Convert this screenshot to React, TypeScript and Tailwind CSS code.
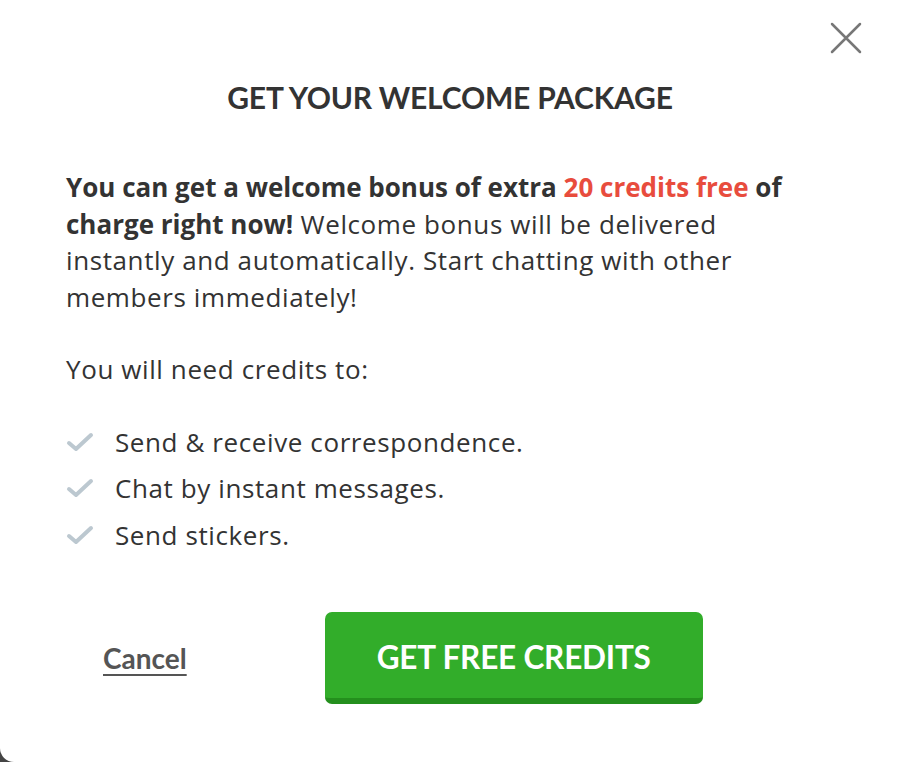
import React from 'react';

const perks = [
  "Send & receive correspondence.",
  "Chat by instant messages.",
  "Send stickers.",
];

const Check = () => (
  <svg width="28" height="22" viewBox="0 0 28 22" fill="none" className="shrink-0">
    <path d="M3 12 L10 18 L25 4" stroke="#bcc8d0" strokeWidth="4" strokeLinecap="round" strokeLinejoin="round" />
  </svg>
);

const App = () => {
  return (
    <div className="w-[900px] h-[762px] bg-[#444]">
      <div
        className="relative w-full h-full bg-white rounded-bl-[14px] text-[#333] flex flex-col"
        style={{ fontFamily: 'Lato, "Noto Sans", sans-serif' }}
      >
        <button className="absolute right-[38px] top-[22px] w-[32px] h-[32px]">
          <svg viewBox="0 0 32 32" width="32" height="32">
            <path d="M2 2 L30 30 M30 2 L2 30" stroke="#777" strokeWidth="2.5" strokeLinecap="round" />
          </svg>
        </button>

        <h2 className="mt-[78px] text-center text-[30px] font-bold leading-[38px] tracking-[-0.2px]">
          GET YOUR WELCOME PACKAGE
        </h2>

        <div
          className="mt-[53px] pl-[66px] pr-[90px] text-[26px] leading-[36.5px] tracking-[0.6px]"
          style={{ fontFamily: '"Open Sans", sans-serif' }}
        >
          <p>
            <b className="tracking-normal">
              You can get a welcome bonus of extra{' '}
              <span className="text-[#e84c3d]">20 credits free</span> of charge right now!
            </b>{' '}
            Welcome bonus will be delivered instantly and automatically. Start chatting with other
            members immediately!
          </p>

          <p className="mt-[36px]">You will need credits to:</p>

          <ul className="mt-[36px] flex flex-col gap-[10px]">
            {perks.map((perk, i) => (
              <li key={i} className="flex items-center gap-[21px]">
                <Check />
                <span>{perk}</span>
              </li>
            ))}
          </ul>
        </div>

        <div className="mt-[59px] flex items-center pl-[103px]">
          <a href="#" className="text-[28px] font-bold text-[#555] underline underline-offset-[5px]">
            Cancel
          </a>
          <button className="ml-[138px] w-[378px] h-[92px] pt-[6px] rounded-[7px] bg-[#32ad2a] border-b-[6px] border-[#248f1d] text-white text-[31.5px] font-bold tracking-[-0.2px]">
            GET FREE CREDITS
          </button>
        </div>
      </div>
    </div>
  );
};

export default App;
